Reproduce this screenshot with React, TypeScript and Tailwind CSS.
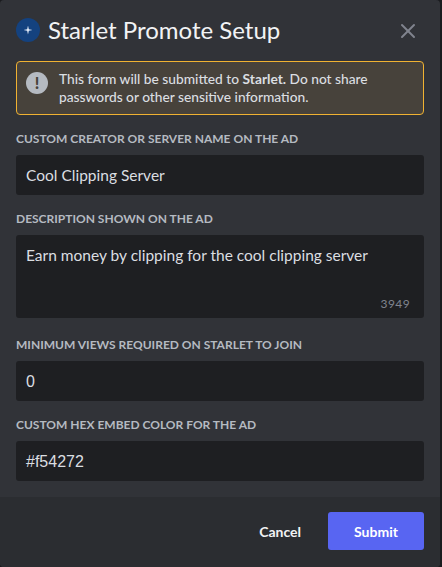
import { X } from 'lucide-react';

const labelClass =
  'mb-[8px] text-[12px] leading-[16px] font-bold text-[#b5bac1] uppercase whitespace-nowrap';

function Field({ label, value, arial }: { label: string; value: string; arial?: boolean }) {
  return (
    <div className="mb-[16px]">
      <div className={labelClass}>{label}</div>
      <div
        className={
          arial
            ? "h-[40px] rounded-[3px] bg-[#1e1f22] px-[10px] pt-[2px] flex items-center text-[16px] text-[#dbdee1] font-['Liberation_Sans']"
            : 'h-[40px] rounded-[3px] bg-[#1e1f22] px-[10px] pt-[2px] flex items-center text-[15.5px] text-[#dbdee1]'
        }
      >
        {value}
      </div>
    </div>
  );
}

export default function App() {
  return (
    <div className="w-[442px] h-[567px] bg-[#1a1b1e] overflow-hidden font-['Lato']">
      <div className="w-[440px] h-[567px] flex flex-col rounded-[4px] overflow-hidden bg-[#313338]">
        {/* Header */}
        <div className="shrink-0 flex items-center h-[61px] pl-[16px] pr-[20px] pb-[1px]">
          <div className="w-[24px] h-[24px] rounded-full bg-[#14427f] flex items-center justify-center shrink-0">
            <svg width="10" height="10" viewBox="0 0 12 12">
              <path d="M6 0.5 L7 5 L11.5 6 L7 7 L6 11.5 L5 7 L0.5 6 L5 5 Z" fill="#e6eefa" />
            </svg>
          </div>
          <div className="ml-[8px] text-[24px] leading-[30px] text-[#f2f3f5] whitespace-nowrap">Starlet Promote Setup</div>
          <X className="ml-auto mt-[2px] text-[#80848e]" size={24} strokeWidth={2} />
        </div>

        {/* Notice */}
        <div className="shrink-0 mx-[16px] h-[54px] rounded-[4px] border border-[#f0b232] bg-[#47423b] flex items-start pl-[9px] pr-[8px] pt-[8px]">
          <div className="mt-[2px] w-[22px] h-[22px] rounded-full bg-[#b5bac1] flex items-center justify-center shrink-0">
            <span className="text-[#47423b] text-[16px] leading-none font-black">!</span>
          </div>
          <p className="ml-[11px] text-[13.75px] leading-[18px] font-medium text-[#dbdee1]">
            This form will be submitted to <b className="font-bold">Starlet.</b> Do not share passwords or other sensitive information.
          </p>
        </div>

        {/* Form */}
        <div className="flex-1 px-[16px] pt-[16px]">
          <Field label="Custom creator or server name on the ad" value="Cool Clipping Server" />
          <div className="mb-[19px]">
            <div className={labelClass}>Description shown on the ad</div>
            <div className="relative h-[83px] rounded-[3px] bg-[#1e1f22] px-[10px] pt-[9px] text-[15.5px] leading-[22px] text-[#dbdee1] whitespace-nowrap">
              Earn money by clipping for the cool clipping server
              <span className="absolute right-[14px] bottom-[7px] text-[12px] leading-[14px] tracking-[0.4px] text-[#80848e]">3949</span>
            </div>
          </div>
          <Field label="Minimum views required on Starlet to join" value="0" arial />
          <Field label="Custom hex embed color for the ad" value="#f54272" arial />
        </div>

        {/* Footer */}
        <div className="shrink-0 h-[70px] bg-[#2b2d31] flex items-center justify-end px-[16px] pb-[2px]">
          <button className="text-[14px] font-bold text-[#f2f3f5] mr-[27px]">Cancel</button>
          <button className="w-[96px] h-[38px] rounded-[3px] bg-[#5865f2] text-[14px] font-bold text-white">Submit</button>
        </div>
      </div>
    </div>
  );
}
